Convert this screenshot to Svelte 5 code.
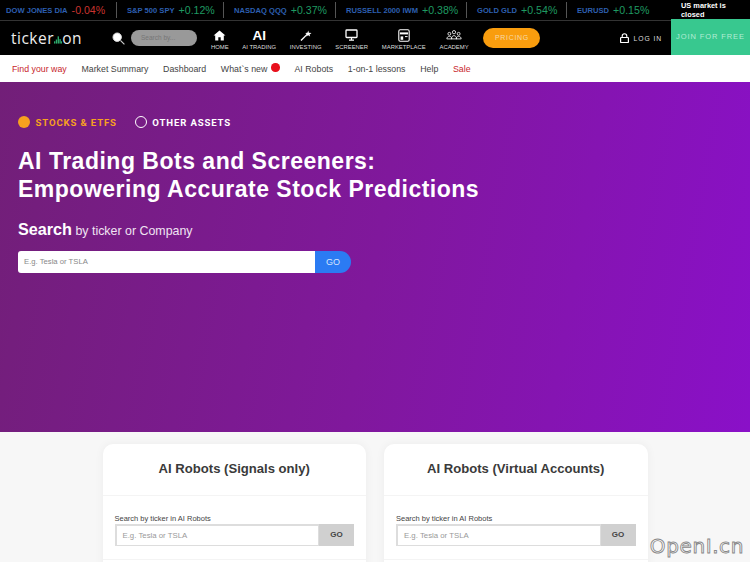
<script>
  const quotes = [
    { name: "DOW JONES DIA", pct: "-0.04%", down: true, w: 117 },
    { name: "S&P 500 SPY", pct: "+0.12%", w: 107 },
    { name: "NASDAQ QQQ", pct: "+0.37%", w: 112 },
    { name: "RUSSELL 2000 IWM", pct: "+0.38%", w: 131 },
    { name: "GOLD GLD", pct: "+0.54%", w: 100 },
    { name: "EURUSD", pct: "+0.15%", w: 114 },
  ];
  const navItems = ["HOME", "AI TRADING", "INVESTING", "SCREENER", "MARKETPLACE", "ACADEMY"];
  const links = [
    { label: "Find your way", red: true },
    { label: "Market Summary" },
    { label: "Dashboard" },
    { label: "What`s new", dot: true },
    { label: "AI Robots" },
    { label: "1-on-1 lessons" },
    { label: "Help" },
    { label: "Sale", red: true },
  ];
  const cards = ["AI Robots (Signals only)", "AI Robots (Virtual Accounts)"];
</script>

<div class="page">
  <div class="ticker">
    {#each quotes as q}
      <div class="quote" style="width: {q.w}px">
        <span class="name">{q.name}</span>
        <span class="pct" class:down={q.down}>{q.pct}</span>
      </div>
    {/each}
    <div class="market">US market is closed</div>
  </div>

  <div class="nav">
    <div class="logo">
      <span>ticker</span>
      <svg width="9" height="9" viewBox="0 0 9 9">
        <rect x="0" y="6.5" width="1.5" height="2.5" fill="#2fae6e" />
        <rect x="2" y="4.5" width="1.5" height="4.5" fill="#2fae6e" />
        <rect x="4" y="1" width="1.5" height="8" fill="#2fae6e" />
        <rect x="6" y="4" width="1.5" height="5" fill="#2fae6e" />
        <rect x="7.8" y="6.5" width="1.2" height="2.5" fill="#2fae6e" />
      </svg>
      <span>on</span>
    </div>
    <svg class="glass" width="13" height="13" viewBox="0 0 13 13">
      <circle cx="5.2" cy="5.2" r="4.2" fill="#fff" stroke="#ddd" stroke-width="1" />
      <path d="M8.4 8.4 L12.4 12.4" stroke="#ccc" stroke-width="1.1" />
    </svg>
    <div class="search">Search by...</div>
    <div class="menu">
      {#each navItems as item, i}
        <div class="item">
          <div class="icon">
            {#if i === 0}
              <svg width="13" height="11" viewBox="0 0 13 12"><path d="M6.5 0.5 L13 6 L11.2 6 L11.2 11.5 L7.8 11.5 L7.8 8 L5.2 8 L5.2 11.5 L1.8 11.5 L1.8 6 L0 6 Z" fill="#fff" /></svg>
            {:else if i === 1}
              <span class="ai">AI</span>
            {:else if i === 2}
              <svg width="12" height="11" viewBox="0 0 13 12"><path d="M1 11.5 L8 4.5" stroke="#fff" stroke-width="1.5" /><path d="M9 0.5 L9.6 3 L12.5 3.2 L10.4 4.8 L11 7.2 L8.8 5.8 L6.8 7 L7.4 4.6 L5.6 3.2 L8 3 Z" fill="#fff" /></svg>
            {:else if i === 3}
              <svg width="13" height="12" viewBox="0 0 13 12"><rect x="1" y="1" width="11" height="7.5" rx="0.8" fill="none" stroke="#fff" stroke-width="1.3" /><path d="M6.5 8.5 V11 M4 11.2 H9" stroke="#fff" stroke-width="1.2" /></svg>
            {:else if i === 4}
              <svg width="12" height="13" viewBox="0 0 12 13"><rect x="0.8" y="0.8" width="10.4" height="11.4" rx="1.4" fill="none" stroke="#fff" stroke-width="1.1" /><rect x="2" y="3.4" width="8" height="2" fill="#fff" /><rect x="2.6" y="7.4" width="2.6" height="3.4" fill="#fff" /><path d="M7 7.6 H9.6" stroke="#fff" /></svg>
            {:else}
              <svg width="16" height="10" viewBox="0 0 17 11" fill="none" stroke="#fff" stroke-width="0.9"><circle cx="3.4" cy="4.2" r="1.6" /><circle cx="8.5" cy="2.4" r="1.8" /><circle cx="13.6" cy="4.2" r="1.6" /><path d="M0.6 9.8 C0.8 6 6 6 6.2 9.8 Z M5.6 9.8 C5.8 5 11.2 5 11.4 9.8 Z M10.8 9.8 C11 6 16.2 6 16.4 9.8 Z" /></svg>
            {/if}
          </div>
          <span>{item}</span>
        </div>
      {/each}
    </div>
    <div class="pricing">PRICING</div>
    <div class="login">
      <svg width="9" height="10" viewBox="0 0 9 10"><path d="M2.2 4.5 V3 a2.3 2.3 0 0 1 4.6 0 V4.5" fill="none" stroke="#fff" stroke-width="1.1" /><rect x="0.6" y="4.5" width="7.8" height="5" rx="0.6" fill="none" stroke="#fff" stroke-width="1.2" /></svg>
      <span>LOG IN</span>
    </div>
    <div class="join">JOIN FOR FREE</div>
  </div>

  <div class="subnav">
    {#each links as link}
      <span class="link" class:red={link.red}>
        {link.label}
        {#if link.dot}<i class="dot"></i>{/if}
      </span>
    {/each}
  </div>

  <div class="hero">
    <div class="assets">
      <span class="asset on"><i class="radio filled"></i>STOCKS &amp; ETFS</span>
      <span class="asset"><i class="radio"></i>OTHER ASSETS</span>
    </div>
    <h1>AI Trading Bots and Screeners:<br />Empowering Accurate Stock Predictions</h1>
    <div class="lead"><b>Search</b> by ticker or Company</div>
    <div class="hero-search">
      <div class="field">E.g. Tesla or TSLA</div>
      <div class="go">GO</div>
    </div>
  </div>

  <div class="robots">
    {#each cards as title}
      <div class="card">
        <h2>{title}</h2>
        <div class="card-body">
          <div class="label">Search by ticker in AI Robots</div>
          <div class="card-search">
            <div class="card-field">E.g. Tesla or TSLA</div>
            <div class="card-go">GO</div>
          </div>
        </div>
      </div>
    {/each}
  </div>

  <div class="watermark">OpenI.cn</div>
</div>

<style>
  :global(body) {
    margin: 0;
    background: #f7f7f7;
  }
  .page {
    position: relative;
    width: 750px;
    height: 562px;
    overflow: hidden;
    font-family: "Liberation Sans", Arial, sans-serif;
  }
  .ticker {
    display: flex;
    align-items: center;
    height: 20px;
    background: #000;
    border-bottom: 1px solid #333;
  }
  .quote {
    display: flex;
    flex-shrink: 0;
    align-items: center;
    gap: 4px;
    box-sizing: border-box;
    height: 16px;
    padding-left: 10px;
    border-right: 1px solid #555;
    white-space: nowrap;
  }
  .quote:first-child {
    padding-left: 6px;
  }
  .quote:nth-child(6) {
    border-right: 0;
  }
  .name {
    font-size: 7.6px;
    font-weight: 700;
    color: #2d5fb0;
  }
  .pct {
    font-size: 10.6px;
    color: #1f9a62;
  }
  .pct.down {
    color: #c8342f;
  }
  .market {
    width: 58px;
    font-size: 7.4px;
    line-height: 9px;
    font-weight: 700;
    color: #fff;
  }
  .nav {
    display: flex;
    align-items: center;
    height: 34px;
    background: #000;
    padding-left: 11px;
  }
  .logo {
    display: flex;
    flex-shrink: 0;
    align-items: center;
    width: 71px;
    font-family: "Open Sans", sans-serif;
    font-size: 15.5px;
    letter-spacing: 0.5px;
    color: #eee;
  }
  .logo svg {
    margin: 3px 0 0;
  }
  .glass {
    flex-shrink: 0;
    margin-left: 30px;
  }
  .search {
    flex-shrink: 0;
    box-sizing: border-box;
    width: 66px;
    height: 16px;
    margin-left: 6px;
    padding: 3px 10px;
    border-radius: 8px;
    background: #999;
    color: #777;
    font-size: 6.5px;
    line-height: 10px;
  }
  .menu {
    display: flex;
    flex-shrink: 0;
    margin-left: 7px;
    padding-top: 2px;
  }
  .item {
    display: flex;
    flex-direction: column;
    align-items: center;
    justify-content: flex-end;
    gap: 2px;
    padding: 0 6.9px;
    color: #ddd;
    font-size: 5.9px;
    white-space: nowrap;
  }
  .icon {
    display: flex;
    align-items: center;
    justify-content: center;
    height: 14px;
  }
  .ai {
    color: #fff;
    font-size: 13.5px;
    font-weight: 700;
  }
  .pricing {
    flex-shrink: 0;
    width: 57px;
    height: 20px;
    margin-left: 8px;
    border-radius: 10px;
    background: #f99d0e;
    color: #f6d9a8;
    font-size: 7px;
    letter-spacing: 0.7px;
    line-height: 20px;
    text-align: center;
  }
  .login {
    display: flex;
    flex-shrink: 0;
    align-items: center;
    gap: 5px;
    margin-left: auto;
    margin-right: 9px;
    color: #ddd;
    font-size: 6.8px;
    letter-spacing: 0.9px;
    white-space: nowrap;
  }
  .join {
    flex-shrink: 0;
    box-sizing: border-box;
    width: 79px;
    height: 36px;
    margin-top: -2px;
    background: #38c88f;
    color: #b4ecd4;
    font-size: 7.5px;
    letter-spacing: 0.9px;
    line-height: 36px;
    text-align: center;
  }
  .subnav {
    display: flex;
    align-items: center;
    gap: 14.7px;
    height: 27px;
    padding-left: 12px;
    background: #fff;
    font-size: 8.8px;
    color: #444;
    white-space: nowrap;
  }
  .link {
    display: flex;
    align-items: center;
    gap: 4px;
  }
  .red {
    color: #c8262c;
  }
  .dot {
    width: 8.5px;
    height: 8.5px;
    border-radius: 50%;
    background: #e8101c;
    margin-top: -2px;
  }
  .hero {
    box-sizing: border-box;
    height: 350px;
    padding: 34px 18px 0;
    background: linear-gradient(100deg, #721f78 0%, #80189c 50%, #8a10c8 100%);
    color: #fff;
  }
  .assets {
    display: flex;
    gap: 18px;
    font-family: Roboto, sans-serif;
    font-size: 9.6px;
    font-weight: 700;
    letter-spacing: 0.85px;
  }
  .asset {
    display: flex;
    align-items: center;
    gap: 5.5px;
  }
  .asset.on {
    color: #f7a11f;
  }
  .radio {
    box-sizing: border-box;
    width: 12px;
    height: 12px;
    border: 1px solid #fff;
    border-radius: 50%;
  }
  .radio.filled {
    background: #f7a11f;
    border: 0;
  }
  h1 {
    margin: 20px 0 0;
    font-size: 23px;
    line-height: 27.5px;
    font-weight: 700;
    letter-spacing: 0.5px;
  }
  .lead {
    margin-top: 17px;
    font-size: 12.4px;
    color: #f0e4f2;
  }
  .lead b {
    font-size: 16.2px;
    color: #fff;
  }
  .hero-search {
    display: flex;
    width: 333px;
    height: 22px;
    margin-top: 12px;
  }
  .field {
    flex: 1;
    padding-left: 6px;
    background: #fff;
    border-radius: 3px 0 0 3px;
    color: #888;
    font-size: 7.7px;
    line-height: 22px;
  }
  .go {
    width: 36px;
    background: #2b7bf3;
    border-radius: 0 11px 11px 0;
    color: #d8e6fc;
    font-size: 9px;
    line-height: 22px;
    text-align: center;
  }
  .robots {
    display: flex;
    justify-content: center;
    gap: 18px;
    height: 130px;
    padding-top: 12px;
    box-sizing: border-box;
    background: #f7f7f7;
  }
  .card {
    width: 263.5px;
    height: 140px;
    background: #fff;
    border-radius: 10px;
    box-shadow: 0 0 10px rgba(0, 0, 0, 0.05);
  }
  h2 {
    height: 51px;
    margin: 0;
    border-bottom: 1px solid #f4f4f4;
    color: #3a3a3a;
    font-size: 13.1px;
    font-weight: 700;
    line-height: 49px;
    text-align: center;
  }
  .card-body {
    padding: 18px 12px 0;
    border-bottom: 1px solid #f4f4f4;
    height: 45px;
  }
  .label {
    color: #444;
    font-size: 7.5px;
    line-height: 10px;
  }
  .card-search {
    display: flex;
    height: 22px;
  }
  .card-field {
    flex: 1;
    padding-left: 6px;
    border: 1px solid #ddd;
    border-left-width: 2px;
    border-top-width: 2px;
    color: #999;
    font-size: 7.8px;
    line-height: 19px;
  }
  .card-go {
    width: 35px;
    background: #d0d0d0;
    color: #444;
    font-size: 8px;
    font-weight: 700;
    line-height: 22px;
    text-align: center;
  }
  .watermark {
    position: absolute;
    right: 6px;
    bottom: 4px;
    font-family: "DejaVu Sans", sans-serif;
    font-size: 20px;
    color: #fff;
    -webkit-text-stroke: 0.9px #888;
    letter-spacing: 0.6px;
  }
</style>
